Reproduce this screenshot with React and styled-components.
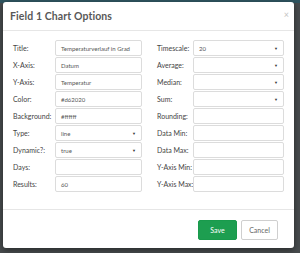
import React from 'react'
import styled, { createGlobalStyle } from 'styled-components'

const GlobalStyle = createGlobalStyle`
  html, body {
    margin: 0;
    padding: 0;
    background: #474b4d;
    font-family: 'Lato', 'Open Sans', sans-serif;
  }
`

const Backdrop = styled.div`
  width: 300px;
  height: 253px;
  box-sizing: border-box;
  padding: 2px 6px 5px 3px;
  background: linear-gradient(#2f5560 0, #2f5560 3px, #474b4d 3px);
`

const Modal = styled.div`
  width: 291px;
  height: 246px;
  background: #fff;
  border-radius: 3px;
  box-shadow: 0 2px 6px rgba(0, 0, 0, 0.45);
  display: flex;
  flex-direction: column;
  overflow: hidden;
`

const Header = styled.div`
  height: 28px;
  flex: none;
  display: flex;
  align-items: center;
  justify-content: space-between;
  padding: 0 5px 0 7px;
  border-bottom: 1px solid #e6e6e6;
`

const Title = styled.h4`
  margin: 0;
  font-size: 10.5px;
  font-weight: 700;
  color: #585858;
  letter-spacing: 0.1px;
`

const Close = styled.span`
  font-size: 9px;
  color: #c4c4c4;
  line-height: 1;
  margin-top: -3px;
`

const Body = styled.div`
  display: flex;
  gap: 15px;
  padding: 9px 10px 17px 10px;
  border-bottom: 1px solid #e6e6e6;
`

const Column = styled.div`
  width: ${p => p.$width}px;
  display: grid;
  grid-template-columns: ${p => p.$label}px 1fr;
  grid-auto-rows: 16px;
  row-gap: 1px;
  align-items: center;
`

const Label = styled.label`
  font-size: 7px;
  color: #444;
  white-space: nowrap;
`

const Field = styled.div`
  position: relative;
  height: 16px;
  box-sizing: border-box;
  border: 1px solid #dcdcdc;
  border-radius: 2px;
  background: #fff;
  padding: 0 10px 0 5px;
  display: flex;
  align-items: center;
  font-size: 6px;
  color: #555;
  white-space: nowrap;
  overflow: hidden;
`

const Caret = styled.span`
  position: absolute;
  right: 5px;
  top: 50%;
  transform: translateY(-50%);
  font-size: 4px;
  color: #333;
`

const Footer = styled.div`
  display: flex;
  justify-content: flex-end;
  gap: 4px;
  padding: 10px 16px 0 0;
`

const Button = styled.button`
  width: ${p => p.$width}px;
  height: 20px;
  border-radius: 2px;
  font-family: inherit;
  font-size: 7px;
  cursor: pointer;
  border: 1px solid ${p => (p.$primary ? '#199a4c' : '#cfcfcf')};
  background: ${p => (p.$primary ? '#1d9e50' : '#fff')};
  color: ${p => (p.$primary ? '#fff' : '#666')};
`

const left = [
  { label: 'Title:', value: 'Temperaturverlauf in Grad' },
  { label: 'X-Axis:', value: 'Datum' },
  { label: 'Y-Axis:', value: 'Temperatur' },
  { label: 'Color:', value: '#d62020' },
  { label: 'Background:', value: '#ffffff' },
  { label: 'Type:', value: 'line', select: true },
  { label: 'Dynamic?:', value: 'true', select: true },
  { label: 'Days:', value: '' },
  { label: 'Results:', value: '60' },
]

const right = [
  { label: 'Timescale:', value: '20', select: true },
  { label: 'Average:', value: '', select: true },
  { label: 'Median:', value: '', select: true },
  { label: 'Sum:', value: '', select: true },
  { label: 'Rounding:', value: '' },
  { label: 'Data Min:', value: '' },
  { label: 'Data Max:', value: '' },
  { label: 'Y-Axis Min:', value: '' },
  { label: 'Y-Axis Max:', value: '' },
]

const Rows = ({ items }) =>
  items.map(item => (
    <React.Fragment key={item.label}>
      <Label>{item.label}</Label>
      <Field>
        {item.value}
        {item.select && <Caret>▼</Caret>}
      </Field>
    </React.Fragment>
  ))

export default function App() {
  return (
    <>
      <GlobalStyle />
      <Backdrop>
        <Modal>
          <Header>
            <Title>Field 1 Chart Options</Title>
            <Close>×</Close>
          </Header>
          <Body>
            <Column $width={129} $label={42}>
              <Rows items={left} />
            </Column>
            <Column $width={127} $label={36}>
              <Rows items={right} />
            </Column>
          </Body>
          <Footer>
            <Button $primary $width={39}>Save</Button>
            <Button $width={37}>Cancel</Button>
          </Footer>
        </Modal>
      </Backdrop>
    </>
  )
}
